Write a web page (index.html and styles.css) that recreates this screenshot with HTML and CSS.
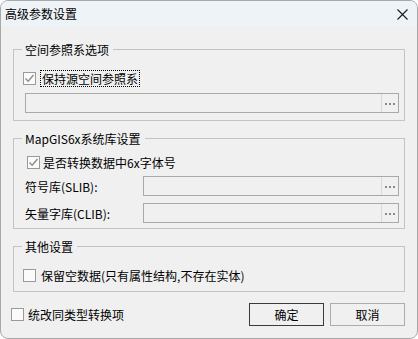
FILE: index.html
```html
<!DOCTYPE html>
<html lang="zh-CN">
<head>
    <meta charset="UTF-8">
    <meta name="viewport" content="width=device-width, initial-scale=1.0">
    <title>高级参数设置</title>
    <link rel="stylesheet" href="styles.css">
</head>
<body>
<div class="window">
    <div class="titlebar">
        <span class="title">高级参数设置</span>
        <svg class="close" width="11" height="11" viewBox="0 0 11 11">
            <path d="M0.5 0.5 L10.5 10.5 M10.5 0.5 L0.5 10.5" stroke="#1a1a1a" stroke-width="1.1" fill="none"/>
        </svg>
    </div>

    <div class="content">
        <fieldset class="group g1">
            <legend>空间参照系选项</legend>
            <label class="check c1">
                <span class="box">
                    <svg width="11" height="11" viewBox="0 0 11 11"><path d="M1.5 5.5 L4.2 8.3 L9.5 2" stroke="#8c8c8c" stroke-width="1.4" fill="none"/></svg>
                </span>
                <span class="text focus">保持源空间参照系</span>
            </label>
            <div class="field wide">
                <span class="input"></span>
                <span class="browse"><i></i><i></i><i></i></span>
            </div>
        </fieldset>

        <fieldset class="group g2">
            <legend>MapGIS6x系统库设置</legend>
            <label class="check c2">
                <span class="box">
                    <svg width="11" height="11" viewBox="0 0 11 11"><path d="M1.5 5.5 L4.2 8.3 L9.5 2" stroke="#8c8c8c" stroke-width="1.4" fill="none"/></svg>
                </span>
                <span class="text">是否转换数据中6x字体号</span>
            </label>
            <div class="row r1">
                <span class="row-label">符号库(SLIB):</span>
                <div class="field">
                    <span class="input"></span>
                    <span class="browse"><i></i><i></i><i></i></span>
                </div>
            </div>
            <div class="row r2">
                <span class="row-label">矢量字库(CLIB):</span>
                <div class="field">
                    <span class="input"></span>
                    <span class="browse"><i></i><i></i><i></i></span>
                </div>
            </div>
        </fieldset>

        <fieldset class="group g3">
            <legend>其他设置</legend>
            <label class="check c3">
                <span class="box"></span>
                <span class="text">保留空数据(只有属性结构,不存在实体)</span>
            </label>
        </fieldset>

        <div class="footer">
            <label class="check c4">
                <span class="box"></span>
                <span class="text">统改同类型转换项</span>
            </label>
            <div class="buttons">
                <button class="btn default">确定</button>
                <button class="btn">取消</button>
            </div>
        </div>
    </div>
</div>
</body>
</html>
```

FILE: styles.css
```css
* {
    box-sizing: border-box;
}
body {
    margin: 0;
    background: #ffffff;
    font-family: "Noto Sans CJK SC", "Noto Sans", sans-serif;
    font-size: 12px;
    color: #000;
}
.window {
    width: 418px;
    height: 339px;
    border: 1px solid #a8a8a8;
    border-radius: 8px;
    background: #f0f0f0;
    overflow: hidden;
}
.titlebar {
    height: 25px;
    display: flex;
    align-items: center;
    justify-content: space-between;
    padding: 0 9px 0 4px;
    background: #eef3f8;
}
.title {
    line-height: 16px;
}
.close {
    display: block;
    margin-top: 1px;
}

.content {
    padding: 0 12px;
}
.group {
    margin: 0;
    min-width: 0;
    border: 1px solid #c4c4c4;
    padding: 0 5px 0 8px;
}
.group legend {
    padding: 0 4px 0 3px;
    line-height: 17px;
    height: 17px;
}
.g1 {
    margin-top: 15px;
    padding-top: 12px;
    padding-bottom: 7px;
}
.g2 {
    margin-top: 9px;
    padding-top: 7px;
    padding-bottom: 5px;
}
.g3 {
    margin-top: 9px;
    padding-top: 12px;
    padding-bottom: 7px;
}

.check {
    display: flex;
    align-items: center;
    height: 17px;
    line-height: 17px;
}
.box {
    width: 13px;
    height: 13px;
    border: 1px solid #9a9a9a;
    background: #fbfbfb;
    display: flex;
    align-items: center;
    justify-content: center;
    flex: none;
}
.box svg {
    display: block;
}
.text {
    margin-left: 5px;
    white-space: nowrap;
}
.focus {
    margin-left: 4px;
    padding: 0 1px;
    border: 1px dotted #000;
    line-height: 15px;
}
.c1 {
    margin-left: 1px;
}
.c2 {
    margin-left: 5px;
}
.c2 .text {
    margin-left: 3px;
}
.c3 {
    margin-left: 1px;
}
.c4 .text {
    margin-left: 4px;
}

.field {
    display: flex;
    height: 20px;
    border: 1px solid #a9a9a9;
    background: #f0f0f0;
    flex: 1;
}
.field.wide {
    margin: 6px 0 0 3px;
}
.input {
    flex: 1;
}
.browse {
    width: 17px;
    border-left: 1px solid #d9d9d9;
    display: flex;
    align-items: center;
    justify-content: center;
    gap: 2px;
    padding-top: 1px;
}
.browse i {
    width: 2px;
    height: 2px;
    background: #8a8a8a;
}

.row {
    display: flex;
    align-items: center;
    margin-left: 3px;
}
.r1 {
    margin-top: 5px;
}
.r2 {
    margin-top: 7px;
}
.row-label {
    width: 118px;
    white-space: nowrap;
}

.footer {
    display: flex;
    align-items: center;
    margin-top: 11px;
    height: 23px;
}
.c4 {
    margin-left: -2px;
}
.buttons {
    margin-left: auto;
    display: flex;
    gap: 6px;
}
.btn {
    width: 75px;
    height: 23px;
    border: 1px solid #adadad;
    background: #f0f0f0;
    font-family: inherit;
    font-size: 12px;
    color: #000;
    padding: 0;
}
.btn.default {
    border-color: #3b3b3b;
}
```
